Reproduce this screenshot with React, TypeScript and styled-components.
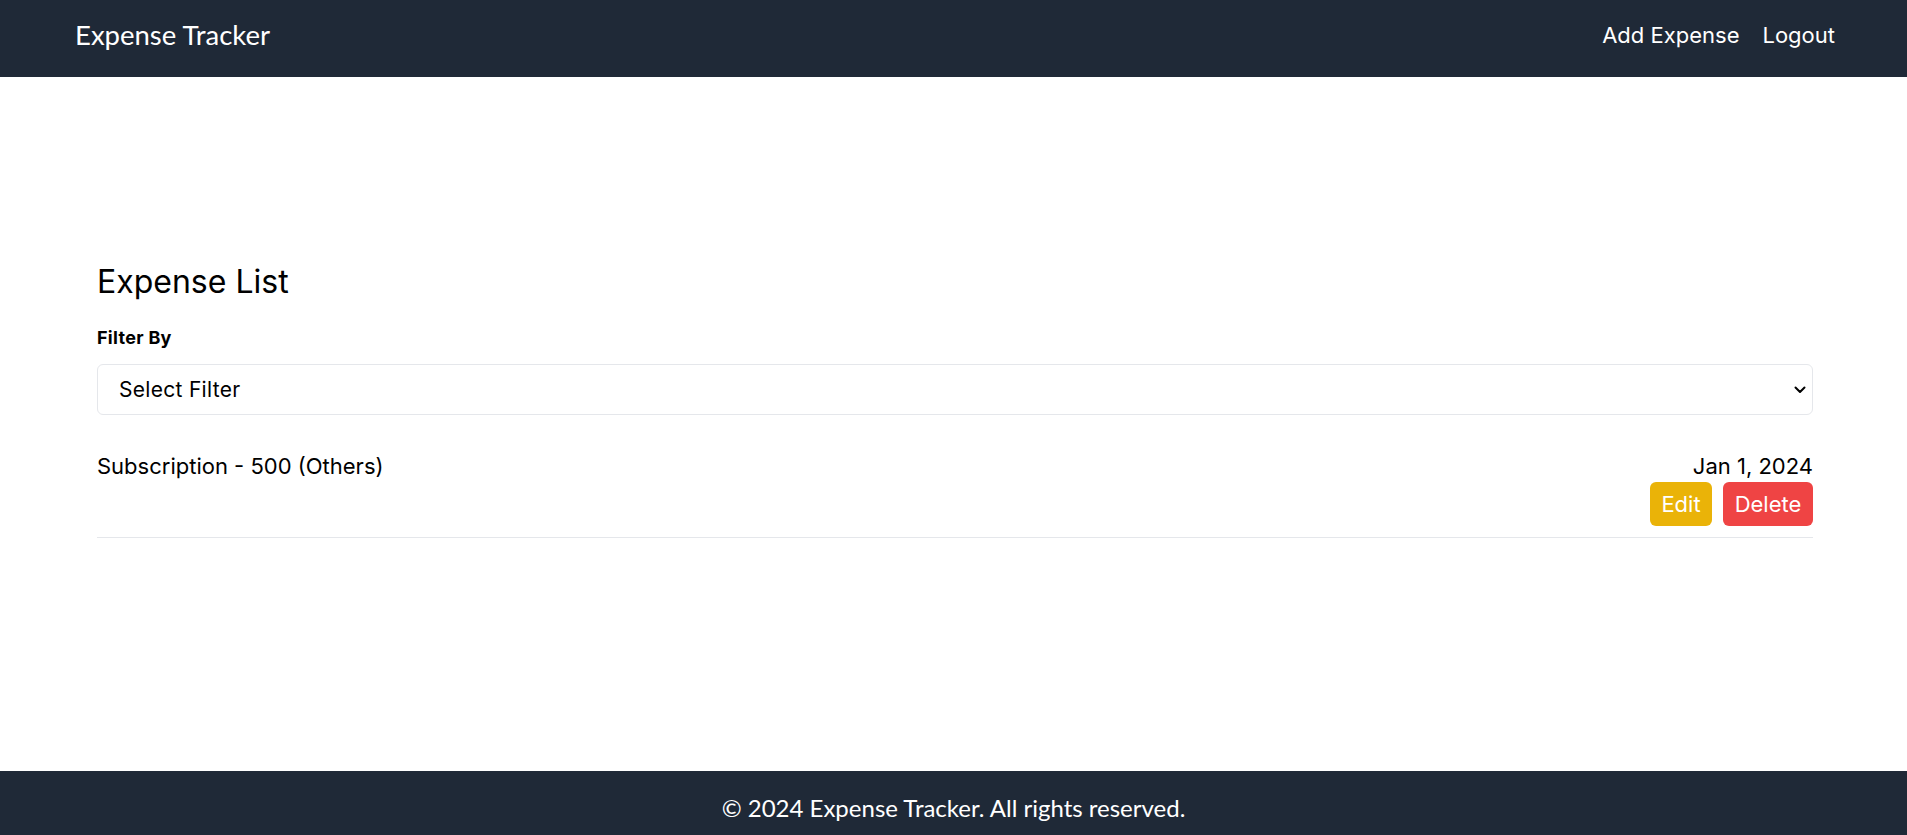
import React from "react";
import styled, { createGlobalStyle } from "styled-components";

const GlobalStyle = createGlobalStyle`
  html, body { margin: 0; padding: 0; }
  body {
    font-family: Inter, "Liberation Sans", sans-serif;
    color: #111827;
    background: #ffffff;
  }
  * { box-sizing: border-box; }
`;

const Page = styled.div`
  min-height: 100vh;
  display: flex;
  flex-direction: column;
`;

const Header = styled.header`
  height: 77px;
  background: #1f2937;
  color: #ffffff;
  display: flex;
  align-items: center;
  justify-content: space-between;
  padding: 0 72px 7px 75px;
`;

const Brand = styled.div`
  font-family: Lato, Inter, sans-serif;
  font-size: 27.5px;
  line-height: 36px;
`;

const Nav = styled.nav`
  display: flex;
  gap: 23px;
`;

const NavLink = styled.a`
  color: #ffffff;
  text-decoration: none;
  font-size: 22px;
  line-height: 30px;
`;

const Main = styled.main`
  flex: 1;
  padding: 185px 94px 40px 97px;
`;

const Title = styled.h2`
  margin: 0 0 24px;
  font-weight: 400;
  font-size: 32px;
  line-height: 40px;
  color: #000;
`;

const Label = styled.label`
  display: block;
  font-weight: 700;
  font-size: 18px;
  letter-spacing: 0.3px;
  line-height: 24px;
  margin-bottom: 14px;
  color: #000;
`;

const SelectWrap = styled.div`
  position: relative;
`;

const Select = styled.select`
  width: 100%;
  height: 51px;
  appearance: none;
  -webkit-appearance: none;
  border: 1px solid #e5e7eb;
  border-radius: 6px;
  background: #fff;
  padding: 0 40px 0 21px;
  font-family: Inter, sans-serif;
  font-size: 21px;
  letter-spacing: 0.3px;
  color: #000;
  outline: none;
`;

const Chevron = styled.svg`
  position: absolute;
  right: 6px;
  top: 50%;
  transform: translateY(-50%);
  pointer-events: none;
`;

const Row = styled.div`
  margin-top: 37px;
  display: flex;
  justify-content: space-between;
  align-items: flex-start;
  padding-bottom: 11px;
  border-bottom: 1px solid #e5e7eb;
`;

const ItemText = styled.div`
  font-size: 22px;
  line-height: 28px;
  color: #000;
`;

const Side = styled.div`
  display: flex;
  flex-direction: column;
  align-items: flex-end;
  gap: 2px;
`;

const Buttons = styled.div`
  display: flex;
  gap: 11px;
`;

const Btn = styled.button<{ $bg: string; $w: number }>`
  background: ${(p) => p.$bg};
  color: #fff;
  border: none;
  border-radius: 6px;
  height: 44px;
  width: ${(p) => p.$w}px;
  font-family: Inter, sans-serif;
  font-size: 22px;
  cursor: pointer;
  padding: 0;
`;

const Footer = styled.footer`
  height: 64px;
  background: #1f2937;
  color: #fff;
  display: flex;
  align-items: center;
  justify-content: center;
  padding-top: 10px;
  font-family: Lato, Inter, sans-serif;
  font-size: 24px;
  line-height: 30px;
`;

export default function App() {
  return (
    <Page>
      <GlobalStyle />
      <Header>
        <Brand>Expense Tracker</Brand>
        <Nav>
          <NavLink href="#">Add Expense</NavLink>
          <NavLink href="#">Logout</NavLink>
        </Nav>
      </Header>
      <Main>
        <Title>Expense List</Title>
        <Label>Filter By</Label>
        <SelectWrap>
          <Select defaultValue="">
            <option value="">Select Filter</option>
          </Select>
          <Chevron width="14" height="14" viewBox="0 0 14 14">
            <path d="M2.5 4.5l4.5 4.5 4.5-4.5" fill="none" stroke="#000" strokeWidth="2" strokeLinecap="round" strokeLinejoin="round" />
          </Chevron>
        </SelectWrap>
        <Row>
          <ItemText>Subscription - 500 (Others)</ItemText>
          <Side>
            <ItemText>Jan 1, 2024</ItemText>
            <Buttons>
              <Btn $bg="#eab308" $w={62}>Edit</Btn>
              <Btn $bg="#ef4444" $w={90}>Delete</Btn>
            </Buttons>
          </Side>
        </Row>
      </Main>
      <Footer>© 2024 Expense Tracker. All rights reserved.</Footer>
    </Page>
  );
}
